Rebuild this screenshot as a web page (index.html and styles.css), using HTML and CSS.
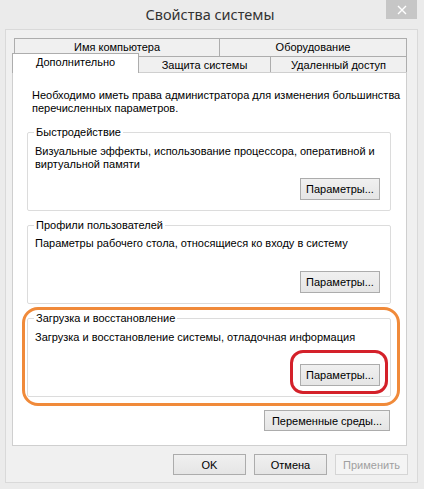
FILE: index.html
```html
<!DOCTYPE html>
<html lang="ru">
<head>
<meta charset="utf-8">
<title>Свойства системы</title>
<link rel="stylesheet" href="styles.css">
</head>
<body>
<div class="window">
  <div class="titlebar">
    <span class="title">Свойства системы</span>
    <span class="close"><svg width="10" height="10" viewBox="0 0 10 10"><path d="M1 1 L9 9 M9 1 L1 9" stroke="#fff" stroke-width="1.4" fill="none"/></svg></span>
  </div>
  <div class="client">
    <div class="tabs">
      <div class="row row1">
        <div class="tab t-name">Имя компьютера</div>
        <div class="tab t-hw">Оборудование</div>
      </div>
      <div class="row row2">
        <div class="tab active">Дополнительно</div>
        <div class="tab t-prot">Защита системы</div>
        <div class="tab t-remote">Удаленный доступ</div>
      </div>
    </div>
    <div class="panel">
      <p class="intro">Необходимо иметь права администратора для изменения большинства перечисленных параметров.</p>
      <fieldset class="group g1">
        <legend>Быстродействие</legend>
        <p>Визуальные эффекты, использование процессора, оперативной и виртуальной памяти</p>
        <div class="btnrow"><button class="btn">Параметры...</button></div>
      </fieldset>
      <fieldset class="group g2">
        <legend>Профили пользователей</legend>
        <p>Параметры рабочего стола, относящиеся ко входу в систему</p>
        <div class="btnrow"><button class="btn">Параметры...</button></div>
      </fieldset>
      <fieldset class="group g3">
        <legend>Загрузка и восстановление</legend>
        <p>Загрузка и восстановление системы, отладочная информация</p>
        <div class="btnrow"><button class="btn">Параметры...</button></div>
      </fieldset>
      <div class="envrow"><button class="btn env">Переменные среды...</button></div>
    </div>
    <div class="footer">
      <button class="btn fbtn">OK</button>
      <button class="btn fbtn">Отмена</button>
      <button class="btn fbtn" disabled>Применить</button>
    </div>
  </div>
</div>
<div class="mark orange"></div>
<div class="mark red"></div>
</body>
</html>
```
FILE: styles.css
```css
* { box-sizing: border-box; }
html, body { margin: 0; padding: 0; }
body {
  width: 424px;
  height: 489px;
  background: #ebebeb;
  font-family: "Liberation Sans", Arial, sans-serif;
  font-size: 11px;
  color: #000;
  position: relative;
  overflow: hidden;
}
.titlebar {
  height: 29px;
  display: grid;
  grid-template-columns: 1fr auto 1fr;
  align-items: start;
}
.title {
  grid-column: 2;
  font-family: "Noto Sans", sans-serif;
  font-size: 14.5px;
  color: #333;
  line-height: 29px;
  margin-right: 4px;
}
.close {
  grid-column: 3;
  justify-self: end;
  width: 31px;
  height: 19px;
  margin-right: 7px;
  background: #c6c6c6;
  display: flex;
  align-items: center;
  justify-content: center;
}
.client {
  margin: 0 6px 0 5px;
  height: 454px;
  border: 1px solid #d9d9d9;
  background: #f0f0f0;
  padding: 8px 0 0 6px;
  display: flex;
  flex-direction: column;
}
.tabs {
  width: 395px;
  height: 34px;
  display: flex;
  flex-direction: column;
}
.row { display: flex; }
.row1 { margin-left: 2px; height: 18px; }
.row2 { height: 16px; }
.tab {
  background: #f0f0f0;
  border: 1px solid #adadad;
  border-bottom: none;
  border-right: none;
  display: flex;
  align-items: center;
  justify-content: center;
  line-height: 13px;
  white-space: nowrap;
}
.t-name { width: 205px; }
.t-hw { width: 188px; border-right: 1px solid #adadad; }
.row2 .tab { height: 16px; }
.row2 .tab.active {
  width: 127px;
  height: 20px;
  margin-top: -3px;
  background: #fff;
  border-right: 1px solid #adadad;
  position: relative;
  z-index: 2;
  padding-bottom: 2px;
}
.t-prot { width: 131px; border-left: none !important; padding-top: 1px; }
.t-remote { width: 137px; border-right: 1px solid #adadad !important; padding-top: 1px; }
.panel {
  width: 395px;
  height: 374px;
  background: #fff;
  border: 1px solid #cfcfcf;
  padding: 16px 0 0 14px;
  position: relative;
  z-index: 1;
}
.intro {
  margin: 0 0 0 5px;
  line-height: 13px;
  width: 374px;
}
.group {
  margin: 7px 0 0;
  padding: 0;
  width: 364px;
  height: 86px;
  border: 1px solid #dcdcdc;
  border-radius: 2px;
  display: flex;
  flex-direction: column;
}
.g1 { margin-top: 10px; }
.group legend {
  margin-left: 6px;
  padding: 0 2px;
  line-height: 14px;
}
.group p {
  margin: 6px 0 0 7px;
  line-height: 13px;
  width: 345px;
}
.g2 p { margin-top: 5px; }
.btnrow {
  margin-top: auto;
  display: flex;
  justify-content: flex-end;
  padding: 0 10px 10px 0;
}
.btn {
  font-family: "Liberation Sans", Arial, sans-serif;
  font-size: 11px;
  color: #000;
  background: linear-gradient(#f0f0f0, #e5e5e5);
  border: 1px solid #acacac;
  border-radius: 0;
  padding: 0;
  height: 22px;
  width: 80px;
  margin: 0;
}
.envrow {
  width: 364px;
  margin-top: 13px;
  display: flex;
  justify-content: flex-end;
}
.env { width: 126px; margin-right: 1px; height: 21px; }
.footer {
  margin: 8px 9px 0 0;
  display: flex;
  justify-content: flex-end;
  gap: 8px;
}
.fbtn { width: 73px; height: 21px; }
.fbtn:disabled {
  color: #a0a0a0;
  background: #f4f4f4;
  border-color: #d5d5d5;
}
.mark {
  position: absolute;
  pointer-events: none;
  z-index: 5;
}
.orange {
  left: 22px;
  top: 307px;
  width: 378px;
  height: 99px;
  border: 3px solid #f08a3a;
  border-radius: 16px;
}
.red {
  left: 290px;
  top: 350px;
  width: 98px;
  height: 44px;
  border: 3px solid #d4212a;
  border-radius: 13px;
}
```
